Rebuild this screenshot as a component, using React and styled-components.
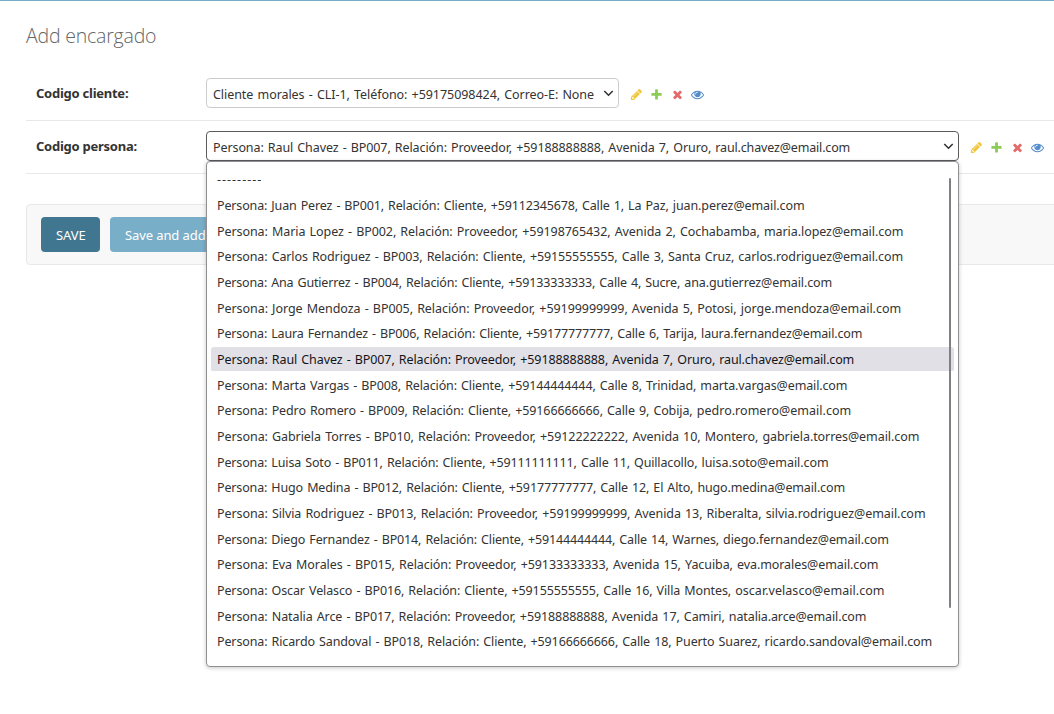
import React from 'react';
import styled, { createGlobalStyle } from 'styled-components';

const GlobalStyle = createGlobalStyle`
  *, *::before, *::after { box-sizing: border-box; }
  html, body { margin: 0; height: 714px; overflow: hidden; background: #fff; }
  body { font-family: "Noto Sans", "Open Sans", sans-serif; font-size: 13px; color: #333; }
`;

const Page = styled.main`
  width: 1054px;
  height: 714px;
  overflow: hidden;
  border-top: 1px solid #79aec8;
  padding: 21px 0 0 26px;
`;

const Title = styled.h1`
  margin: 0 0 18px;
  height: 28px;
  font-family: "Open Sans", sans-serif;
  font-size: 19.5px;
  line-height: 28px;
  font-weight: 300;
  letter-spacing: -0.2px;
  color: #666;
`;

const FormRow = styled.div`
  display: flex;
  align-items: flex-start;
  height: 53px;
  padding: 10px 0 0 10px;
  border-bottom: 1px solid #e8e8e8;
`;

const Label = styled.label`
  width: 170px;
  flex: none;
  line-height: 30px;
  font-weight: 700;
  letter-spacing: -0.25px;
`;

const Field = styled.div`
  position: relative;
  flex: none;
`;

const SelectBox = styled.div`
  display: flex;
  align-items: center;
  justify-content: space-between;
  width: ${(p) => p.$width}px;
  height: 30px;
  padding: 1px 4px 0 6px;
  border: 1px solid ${(p) => (p.$open ? '#5b5b5f' : '#ccc')};
  border-radius: 4px;
  background: #fff;
  white-space: nowrap;
`;

const Text = styled.span`
  white-space: pre;
  font-size: 12.5px;
  word-spacing: 1px;
  letter-spacing: ${(p) => p.$track || 0}px;
`;

const Actions = styled.div`
  display: flex;
  gap: 7.4px;
  padding: 10px 0 0 10.8px;
  svg { display: block; width: 13px; height: 13px; opacity: 0.8; }
`;

const Popup = styled.div`
  position: absolute;
  left: 0;
  top: 30px;
  z-index: 2;
  width: 753px;
  height: 506px;
  padding: 5px 4px;
  border: 1px solid #8f8f94;
  border-radius: 4px;
  background: #fff;
  box-shadow: 0 1px 4px rgba(0, 0, 0, 0.22);
`;

const Option = styled.div`
  display: flex;
  align-items: center;
  height: 25.68px;
  padding-left: 6px;
  border-radius: 2px;
  color: ${(p) => (p.$selected ? '#15141a' : '#333')};
  background: ${(p) => (p.$selected ? '#e0e0e6' : 'transparent')};
  background-clip: padding-box;
  border-bottom: 1px solid transparent;
`;

const Thumb = styled.div`
  position: absolute;
  right: 7px;
  top: 16px;
  width: 2px;
  height: 430px;
  border-radius: 1px;
  background: #808084;
`;

const SubmitRow = styled.div`
  display: flex;
  gap: 10px;
  width: 1060px;
  height: 61px;
  margin-top: 30px;
  padding: 12px 14px;
  border: 1px solid #e8e8e8;
  border-radius: 4px;
  background: #f8f8f8;
`;

const Button = styled.button`
  width: ${(p) => p.$width}px;
  height: 35px;
  padding: 1px 0 0 15px;
  border: 0;
  border-radius: 4px;
  font: inherit;
  letter-spacing: -0.1px;
  text-align: left;
  white-space: nowrap;
  color: #fff;
  background: ${(p) => (p.$primary ? '#417690' : '#79aec8')};
`;

const icons = [
  ['#efb80b', 'M491 1536l91-91-235-235-91 91v107h128v128h107zm523-928q0-22-22-22-10 0-17 7l-542 542q-7 7-7 17 0 22 22 22 10 0 17-7l542-542q7-7 7-17zm-54-192l416 416-832 832h-416v-416zm683 96q0 53-37 90l-166 166-416-416 166-165q36-38 90-38 53 0 91 38l235 234q37 39 37 91z'],
  ['#70bf2b', 'M1600 796v192q0 40-28 68t-68 28h-416v416q0 40-28 68t-68 28h-192q-40 0-68-28t-28-68v-416h-416q-40 0-68-28t-28-68v-192q0-40 28-68t68-28h416v-416q0-40 28-68t68-28h192q40 0 68 28t28 68v416h416q40 0 68 28t28 68z'],
  ['#dd4646', 'M1490 1322q0 40-28 68l-136 136q-28 28-68 28t-68-28l-294-294-294 294q-28 28-68 28t-68-28l-136-136q-28-28-28-68t28-68l294-294-294-294q-28-28-28-68t28-68l136-136q28-28 68-28t68 28l294 294 294-294q28-28 68-28t68 28l136 136q28 28 28 68t-28 68l-294 294 294 294q28 28 28 68z'],
  ['#2b70bf', 'M1664 960q-152-236-381-353 61 104 61 225 0 185-131.5 316.5t-316.5 131.5-316.5-131.5-131.5-316.5q0-121 61-225-229 117-381 353 133 205 333.5 326.5t434.5 121.5 434.5-121.5 333.5-326.5zm-720-384q0-20-14-34t-34-14q-125 0-214.5 89.5t-89.5 214.5q0 20 14 34t34 14 34-14 14-34q0-86 61-147t147-61q20 0 34-14t14-34zm848 384q0 34-20 69-140 230-376.5 368.5t-499.5 138.5-499.5-139-376.5-368q-20-35-20-69t20-69q140-229 376.5-368t499.5-139 499.5 139 376.5 368q20 35 20 69z'],
];

const RelatedActions = () => (
  <Actions>
    {icons.map(([fill, d]) => (
      <svg key={fill} viewBox="0 0 1792 1792"><path fill={fill} d={d} /></svg>
    ))}
  </Actions>
);

const Chevron = () => (
  <svg width="11" height="7" viewBox="0 0 11 7">
    <path d="M1.3 1l4.2 4.2L9.7 1" fill="none" stroke="#333" strokeWidth="1.6" />
  </svg>
);

// [details, details tracking, email, email tracking]
const people = [
  ['---------', 1, '', 0],
  ['Persona: Juan Perez - BP001, Relación: Cliente, +59112345678, Calle 1, La Paz, ', -0.149, 'juan.perez@email.com', -0.085],
  ['Persona: Maria Lopez - BP002, Relación: Proveedor, +59198765432, Avenida 2, Cochabamba, ', -0.072, 'maria.lopez@email.com', -0.07],
  ['Persona: Carlos Rodriguez - BP003, Relación: Cliente, +59155555555, Calle 3, Santa Cruz, ', -0.115, 'carlos.rodriguez@email.com', -0.09],
  ['Persona: Ana Gutierrez - BP004, Relación: Cliente, +59133333333, Calle 4, Sucre, ', -0.168, 'ana.gutierrez@email.com', -0.1],
  ['Persona: Jorge Mendoza - BP005, Relación: Proveedor, +59199999999, Avenida 5, Potosi, ', -0.06, 'jorge.mendoza@email.com', 0],
  ['Persona: Laura Fernandez - BP006, Relación: Cliente, +59177777777, Calle 6, Tarija, ', -0.16, 'laura.fernandez@email.com', -0.14],
  ['Persona: Raul Chavez - BP007, Relación: Proveedor, +59188888888, Avenida 7, Oruro, ', -0.096, 'raul.chavez@email.com', -0.16],
  ['Persona: Marta Vargas - BP008, Relación: Cliente, +59144444444, Calle 8, Trinidad, ', -0.13, 'marta.vargas@email.com', -0.13],
  ['Persona: Pedro Romero - BP009, Relación: Cliente, +59166666666, Calle 9, Cobija, ', -0.115, 'pedro.romero@email.com', 0.03],
  ['Persona: Gabriela Torres - BP010, Relación: Proveedor, +59122222222, Avenida 10, Montero, ', -0.07, 'gabriela.torres@email.com', -0.07],
  ['Persona: Luisa Soto - BP011, Relación: Cliente, +59111111111, Calle 11, Quillacollo, ', -0.147, 'luisa.soto@email.com', -0.05],
  ['Persona: Hugo Medina - BP012, Relación: Cliente, +59177777777, Calle 12, El Alto, ', -0.144, 'hugo.medina@email.com', -0.14],
  ['Persona: Silvia Rodriguez - BP013, Relación: Proveedor, +59199999999, Avenida 13, Riberalta, ', -0.087, 'silvia.rodriguez@email.com', -0.05],
  ['Persona: Diego Fernandez - BP014, Relación: Cliente, +59144444444, Calle 14, Warnes, ', -0.15, 'diego.fernandez@email.com', -0.09],
  ['Persona: Eva Morales - BP015, Relación: Proveedor, +59133333333, Avenida 15, Yacuiba, ', -0.085, 'eva.morales@email.com', -0.08],
  ['Persona: Oscar Velasco - BP016, Relación: Cliente, +59155555555, Calle 16, Villa Montes, ', -0.12, 'oscar.velasco@email.com', 0.05],
  ['Persona: Natalia Arce - BP017, Relación: Proveedor, +59188888888, Avenida 17, Camiri, ', -0.1, 'natalia.arce@email.com', -0.12],
  ['Persona: Ricardo Sandoval - BP018, Relación: Cliente, +59166666666, Calle 18, Puerto Suarez, ', -0.12, 'ricardo.sandoval@email.com', -0.06],
];

const PersonText = ({ person: [details, track, email, emailTrack] }) => (
  <span>
    <Text $track={track}>{details}</Text>
    {email && <Text $track={emailTrack}>{email}</Text>}
  </span>
);

export default function App() {
  return (
    <>
      <GlobalStyle />
      <Page>
        <Title>Add encargado</Title>
        <FormRow>
          <Label>Codigo cliente:</Label>
          <Field>
            <SelectBox $width={413}>
              <span>
                <Text $track={-0.055}>Cliente morales - CLI-1, Teléfono: +59175098424, Correo-E: None</Text>
              </span>
              <Chevron />
            </SelectBox>
          </Field>
          <RelatedActions />
        </FormRow>
        <FormRow>
          <Label>Codigo persona:</Label>
          <Field>
            <SelectBox $width={753} $open>
              <PersonText person={people[7]} />
              <Chevron />
            </SelectBox>
            <Popup>
              {people.map((person, i) => (
                <Option key={person[0]} $selected={i === 7}>
                  <PersonText person={person} />
                </Option>
              ))}
              <Thumb />
            </Popup>
          </Field>
          <RelatedActions />
        </FormRow>
        <SubmitRow>
          <Button $primary $width={59}>SAVE</Button>
          <Button $width={160}>Save and add another</Button>
        </SubmitRow>
      </Page>
    </>
  );
}
